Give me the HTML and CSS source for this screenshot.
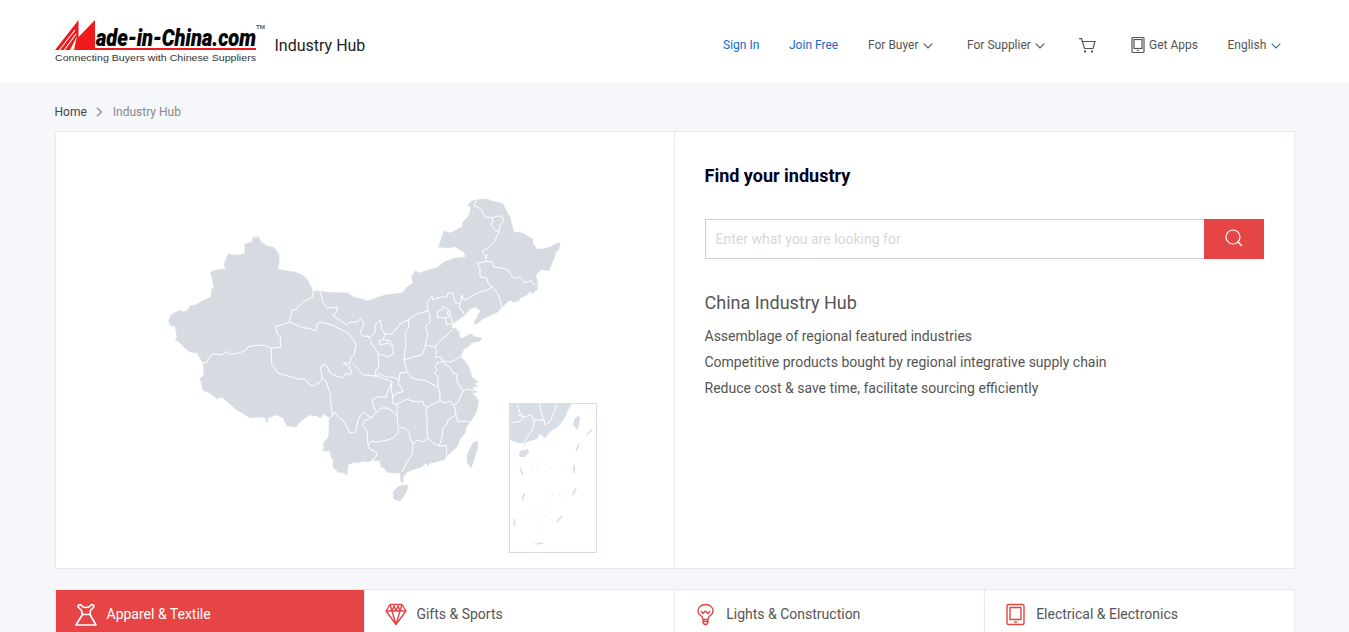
FILE: index.html
```html
<!DOCTYPE html>
<html lang="en">
<head>
<meta charset="utf-8">
<title>Industry Hub</title>
<link rel="stylesheet" href="styles.css">
</head>
<body>
<header class="header">
  <div class="wrap header-row">
    <svg class="logo" width="212" height="46" viewBox="0 0 212 46">
      <path fill="#f01a1a" d="M0 30 23.500 0v17L40 0v28h161v2z"/>
      <path stroke="#fff" stroke-width="1.100" fill="none" d="M4 30.500 20 10M9 30.500 21 14"/>
      <path fill="#fff" d="M15 30 22 16 19 30z"/>
      <text class="logo-name" x="41" y="26" textLength="160" lengthAdjust="spacingAndGlyphs">ade-in-China.com</text>
      <text class="logo-tm" x="201" y="9" textLength="9" lengthAdjust="spacingAndGlyphs">TM</text>
      <text class="logo-tag" x="0" y="41" textLength="201" lengthAdjust="spacingAndGlyphs">Connecting Buyers with Chinese Suppliers</text>
    </svg>
    <span class="hub">Industry Hub</span>
    <nav class="nav">
      <a class="blue sign">Sign In</a>
      <a class="blue join">Join Free</a>
      <a class="buyer">For Buyer<svg class="chev" width="10" height="6" viewBox="0 0 10 6"><path d="m.7.7 4.300 4.300L9.300.7"/></svg></a>
      <a class="supplier">For Supplier<svg class="chev" width="10" height="6" viewBox="0 0 10 6"><path d="m.7.7 4.300 4.300L9.300.7"/></svg></a>
      <a class="cart"><svg width="17" height="15" viewBox="0 0 17 15"><path d="M0 .7h2.500l3 9.800h8.500l2-7H3.500"/><path class="dot" d="M5 12.500h2v2H5zM12 12.500h2v2h-2z"/></svg></a>
      <a class="apps"><svg width="13" height="16" viewBox="0 0 13 16"><rect x="1" y=".5" width="12" height="15" rx="1"/><rect x="3" y="2.500" width="8" height="9"/><path d="M6 13.500h2"/></svg>Get Apps</a>
      <a class="lang">English<svg class="chev" width="10" height="6" viewBox="0 0 10 6"><path d="m.7.7 4.300 4.300L9.300.7"/></svg></a>
    </nav>
  </div>
</header>
<main class="wrap">
  <div class="crumbs"><span class="home">Home</span><svg width="7" height="10" viewBox="0 0 7 10"><path d="m1 .7 4.500 4.300L1 9.300"/></svg><span>Industry Hub</span></div>
  <section class="panel">
    <div class="map-side">
      <svg class="map" width="618" height="436" viewBox="56 132 618 436">
        <g class="land">
          <path d="M168.500 321 170 317 172 314 176 312 180.500 310 182 312 187 311 190 306 195 305 203 301 211 297 211.500 289 214 287 212 278 210.500 272 216 270 224 269 226 268 224 265 226 259 228.300 254 234 255 240 255 245 253 245 244 252 242 253 237 259 237 260 241 267 246 273 247 277 251 279.300 256 279 263 277.500 269 287 271 295 272 302 275 307 279 310 285 313 291 320 291 330 292.500 340 292.700 348 293 353 297 361 299 368 301 376 298 385 295 393 294 402 293 407 287 413 283 411.700 277 415 271 420 273 428 270 437 268 444 262 455 258 466 257 463.500 252 455 246.700 448 248 438.500 247 441 239 444 231 450 233 456 230 462 227 463 222 467 218 470 213 470.700 207 467.500 205 471.700 201 479 199.500 487 199 492 201 497 202 503 204 507 212 510 217 512 225 514 232 523 233 529 237 533 239 533 244 537 249 543 249 550 247 555 244 560 242.700 559 249 556 252 555 256 551 266 549 270.700 541 269.500 536 275 538 285 537 290 534 291 533 294 530 291 527 295 520 298 519 301 513 302 510 300 502 307 498 312 493 314 483 319 479 322 475 324.700 474 321 477 318 479 313 481 311 475 307 470 309 465 315 458 320 452 324 451.700 329 456 328 457 331 460 332 459 336 462 338.500 470 334 476 337 481.700 338 480 341 472 342.700 468 347 464 349 460 357 465 361 468 365 470 371 472 377 478 382 474 384 478 386 473 387 473 390 478 392 472 393 477 398 478.500 402 477 410 475 415 470 422 466 428 465 433 460 439 457 447 452 451 447 456 444 460 436 462 430 463 428 466 426 463 422 467 415 469 407 472 403 477 403.500 482 401 482 400 473 394 473 387 472 384 468 381 467 380 461 372 460 368 462 363 461 357 463 354 462 348 465 347 475 342 472 339 473 333 467 333 459 331 457 330 451 323 450.700 324 442 328 438 329 433 329 419 327 417 323 413 321 418 317 416 310 415 305 418 300 422 296 427 287 426 283 418 277 415 273 416 268 418 267 423 265 417.500 258 417 250 418 244 414 236.700 410 231 405 222 397 217 399 210 393 203 390 200 378 204 376 203 363 197 353 190 352 185 348 180 343 175 339 177 337 175 326 171 326z"/>
          <path d="M477 441 473 443 467 455 467 462 471 468 475 457 478 446zM407 485 399 486 393 492 394 499 400 501 406 493 408 487z"/>
        </g>
        <g class="border">
          <path d="M313 291 313 297 309 299 303 302 300 305 297 308 296 310 292 310 291 315 289 322 281 325 275 327 277 331 277 334 281 337 280 341 281 347 271 348 266 346 258 345 248 347 245 351 238 353 233 354 229 354 226 351.500 222 355 217 354 212 354 209 358 207 362 203 363M272 348 271 354 272 365 278 373 285 375 298 379 305 379 310 385 314 386 318 383 320 382 322 378 325 380 327 384 330 393 331 405 332.700 415 329 419 327 416M322 378 320.700 368 324 364 327 366 330 373 336 376 343 377.700 346 373 350 375 352 372 349 369 350 367 343 363 350 363 351 357 354 355 356 345 354 340 350 335 346 332 342 330 332 325 325 323 320 322 318 323 316 330 313 330 308 328 303 328 297 325 289 322"/>
          <path d="M320 291 323 302 327 308 337 307 337 311 333 316 340 320 347 325 350 322 357 322 360 319 364 322 363 327 360 333 363 336 370 337 375 333 375 325 380 320 381 325 382 330 385 334 392 334 401 323 410 319 413 316 420 313 428 311 427 302 432 296 433 300 437 298 441 297 447 297 448 293 453 293 455 302 460 304 462 295 463 299 466 300 470 297 480 292 487 290 492 287 488 283 487 278 480 277 480 268 477 263 486 261.500 486 257 482 252 488 248 494 242 496 238 499 232 500 226 504 220 501 216 498 216 492 217.700 485 217 482 211 478 207 474 206 476 201M492.500 218 493 222 491 224 492 227 496 231 499 231M486 261.500 492 261.500 494 267 502 268 508 270 511 275 515 278 520 277 524 282 528 282 531 280 533 284 537 284M492 287 498 294 500 301 502 307M487 258 486 256 488 255M460 304 459 308 463 311 464 314M437 315 438 311 442 310 443 306 449 310 447 313 449 316 447 318 438 317.700zM449 310 450.700 317 453 323 447 325 445 318"/>
          <path d="M428 311 430 315 430 322 425 327 427 331 428 334 426 341 425 347M408 319 409 327 405 333 406 343 405 350 404 360 413 357 422 355 426 345 435 347 441 340 447 335 452 330M435 347 437 352 435 357 441 357 443 361 440 363 438 362 435 367 437 370 434 373 438 377 438 387 432 384 425 380 420 380 412 378 407 372 404 360M443 361 450 362 455 360 460 357M443 361 446 365 450 367 453 373 457 374 457 381.700 463 391 468 389 474 391M463 391 458 402 454 405 450 401 445 403 440 401 440 394 438 387M454 405 456 415 458 422 463 421 470 422M456 415 448 420 447 424 443 428 442 438 439 446M440 401 435 403 427 407 426 413 427 419 427 430 428 438 433 443 439 446 446 445.700 447 455"/>
          <path d="M427 407 424 405 423 401 418 402 412 401 407 399 403 401 397 404 393 404 392.700 397 397 393 403 391.700 401 387 398 383 399 379 400 373 407 372M397 404 397 415 398 425 401 428 405 428 409 432 410 438 413 444 417 440 422 442 428 438M413 444 412 455 406 463 402 472M398 428 398 433 393 438 387 440 378 442 372 441 368 445 366.700 430 362.700 425 364 421 371.700 418 375 413 378 411.700 381 408 387 408 391 410 396 415M368 445 370 449 377 453 376 457 372 460M372 418 367 415 364 411.700 360 416 358 420 356 431.700 350 433 347 427 343 420 339 418 335 412 333 415M393 397 391 389 392 382 388 391 386 397 377 397 372 400 374 407 376 411M353 363 357 368 363 375 375 376 383 378 392 382M375 376 376 370 379 367 378 353 372 345 370 339 367 335"/>
          <path d="M385 334 383 340 379 340 380 345 388 343 393 347 393 354 388 357 382 355 379 354M385 340 390 341 393 345M375 376 379 374 387 377 393 377 400 380"/>
        </g>
        <rect class="inset-frame" x="509" y="403.500" width="87" height="149"/>
        <path class="inset-land" d="M510 404h62l-4 6-3 8-8 10-5 2-7 8-5-4-3 5-7 2-5 2v4l-2-4-5 0-8-3zM520 451l8-2 1 3-4 5-5 0-1-3zM578 416l2 1-1 8-2 5-4-6 2-6z"/>
        <path class="inset-border" d="m517 404 3 9 4 4-3 4-10 2M524 417l7-2 3 6-1 8-6 9-4 6M534 420l10 0-3-8-1-8M544 420l1 5 5-3 4-10 3-8M524 417l-6-2"/>
        <path class="inset-dash" d="m592 429-5 6M579 444l-3 7M574 465v8M576 488l-3 7M562 516l-5 6M543 543l-8 1M514.500 519v7M525 493l-3 7M520 468l3 7"/>
        <path class="inset-dots" d="M587 411h1M592 409h1M571 426h1M553 441h1M557 443h1M532 464h1M536 464h1M533 467h1M537 469h1M549 468h1M531 471h1M544 471h1M564 471h1M548 493h1M552 495h1M559 494h1M565 495h1M561 500h1M544 499h1M548 499h1M533 508h1M539 507h1M546 507h1M535 515h1M548 513h1M545 516h1M543 519h1M540 525h1M538 534h1M523 516h1"/>
      </svg>
    </div>
    <div class="find">
      <h1>Find your industry</h1>
      <form class="search"><input type="text" placeholder="Enter what you are looking for"><button type="button"><svg width="18" height="18" viewBox="0 0 18 18"><circle cx="8" cy="8" r="7"/><path d="m13 13 4 4"/></svg></button></form>
      <h2>China Industry Hub</h2>
      <p>Assemblage of regional featured industries</p>
      <p>Competitive products bought by regional integrative supply chain</p>
      <p>Reduce cost &amp; save time, facilitate sourcing efficiently</p>
    </div>
  </section>
  <div class="tabs">
    <div class="tab active"><svg width="22" height="24" viewBox="0 0 22 24"><path d="M3.500 3 5.500 2.500 8 5l3 .5 3-.5 2.500-2.500 2 .5.3 2-3.300 3.500-.5 4L21 23H1L7.500 12.500 6.500 8.500 3.200 5zM7.500 12.500H15"/></svg>Apparel &amp; Textile</div>
    <div class="tab"><svg width="22" height="24" viewBox="0 0 22 24"><path d="M5 2.500h12L21 9 11 22.500 1 9zM1 9h20M5 2.500 7 9l4 13.500L15 9l2-6.500M7 9l2-5 2 5 2-5 2 5"/></svg>Gifts &amp; Sports</div>
    <div class="tab"><svg width="22" height="24" viewBox="0 0 22 24"><path d="M8 17.500 7 14.500C4.500 13 3 11.500 3 9 3 5 6.500 2.500 10.500 2.500S18 5 18 9c0 2.500-1.500 4-4 5.500l-1 3zM8 17.500v3L9.500 22.500h2L13 20.500v-3M8 19.500h5M6 9l2 2.500L10.500 9l2.500 2.500L15 9"/></svg>Lights &amp; Construction</div>
    <div class="tab"><svg width="22" height="24" viewBox="0 0 22 24"><rect x="2" y="2.500" width="17" height="20" rx="1.500"/><rect x="5" y="5.500" width="11" height="12"/><path d="M9 20h3"/></svg>Electrical &amp; Electronics</div>
  </div>
</main>
</body>
</html>
```
FILE: styles.css
```css
* { box-sizing: border-box; }
body { margin: 0; height: 632px; overflow: hidden; background: #f5f7fb; color: #555; font-family: Roboto, "Liberation Sans", sans-serif; }
svg { display: block; flex: none; overflow: visible; }
.wrap { width: 1240px; margin: 0 auto; }
.header { height: 83px; background: #fff; }
.header-row { display: flex; }
.logo { margin: 20px 0 0 .5px; }
.logo-name { font: italic 900 24.5px Roboto, sans-serif; fill: #000; stroke: #000; stroke-width: .2; }
.logo-tm { font: 6px "Liberation Sans", sans-serif; fill: #000; }
.logo-tag { font: 9.5px "Liberation Sans", sans-serif; fill: #333; }
.hub { margin: 35px 0 0 7.5px; width: 448.5px; font-size: 16px; line-height: 21px; color: #222; }
.nav { display: flex; align-items: center; height: 20px; margin-top: 35px; font-size: 12px; white-space: nowrap; }
.nav a { display: flex; align-items: center; }
.nav svg { fill: none; stroke: #555; stroke-width: 1.2; }
.blue { color: #1a66cc; }
.sign { width: 66px; }
.join { width: 79px; }
.buyer { width: 99px; }
.supplier { width: 112px; }
.cart { width: 52px; }
.apps { width: 96.5px; gap: 5px; }
.nav .chev { margin: 2px 0 0 4.5px; }
.nav .lang svg { stroke: #3a6ea0; }
.nav .dot { fill: #555; stroke: none; }
.crumbs { display: flex; align-items: center; height: 48px; padding-top: 10px; font-size: 12px; color: #888; }
.crumbs svg { margin: 0 10px 0 9px; fill: none; stroke: #888; stroke-width: 1.2; }
.home { color: #444; }
.panel { display: flex; height: 438px; background: #fff; border: 1px solid #e6eaf0; }
.map-side { width: 619px; border-right: 1px solid #e6eaf0; }
.map { margin-left: .5px; }
.land path { fill: #d6dbe2; stroke: #d6dbe2; stroke-width: .5; }
.border path { fill: none; stroke: #fff; stroke-width: 1; stroke-linejoin: round; }
.inset-frame { fill: none; stroke: #d8dee6; transform: translateX(.5px); }
.inset-land { fill: #d8dee6; }
.inset-border { fill: none; stroke: #fff; }
.inset-dash { fill: none; stroke: #d8dee6; stroke-width: 1.7; }
.inset-dots { fill: none; stroke: #dedfe2; stroke-width: 1; }
.find { flex: 1; padding: 30px 30px 0 30px; }
h1 { margin: 0; font-size: 18px; line-height: 27px; font-weight: 700; color: #000020; }
.search { display: flex; height: 40px; margin: 30px 0 30px 0; }
.search input { width: 499px; height: 40px; padding: 0 10px; border: 1px solid #cdd1d7; border-right: 0; font: 14px Roboto, sans-serif; outline: 0; }
.search input::placeholder { color: #d8d8d8; opacity: 1; }
.search button { flex: 1; display: flex; justify-content: center; padding: 10px 0 0; align-items: flex-start; border: 0; background: #e64545; }
.search svg { fill: none; stroke: #fff; stroke-width: 1.2; }
h2 { margin: 0 0 7px; font-size: 18px; line-height: 27px; font-weight: 400; color: #555; }
p { margin: 0; font-size: 14px; line-height: 26px; }
.tabs { display: flex; margin-top: 20px; height: 60px; border: 1px solid #e6eaf0; background: #fff; }
.tab { display: flex; width: 310px; height: 48px; padding-left: 20px; align-items: center; gap: 9.5px; font-size: 14px; border-left: 1px solid #e6eaf0; }
.tab svg { fill: none; stroke: #e64545; stroke-width: 1.4; stroke-linejoin: round; }
.tab.active { width: 308.5px; padding-left: 19.5px; height: 58px; padding-bottom: 10px; border: 0; color: #fff; background: #e64545; }
.tab.active svg { stroke: #fff; stroke-width: 1.7; }
```
